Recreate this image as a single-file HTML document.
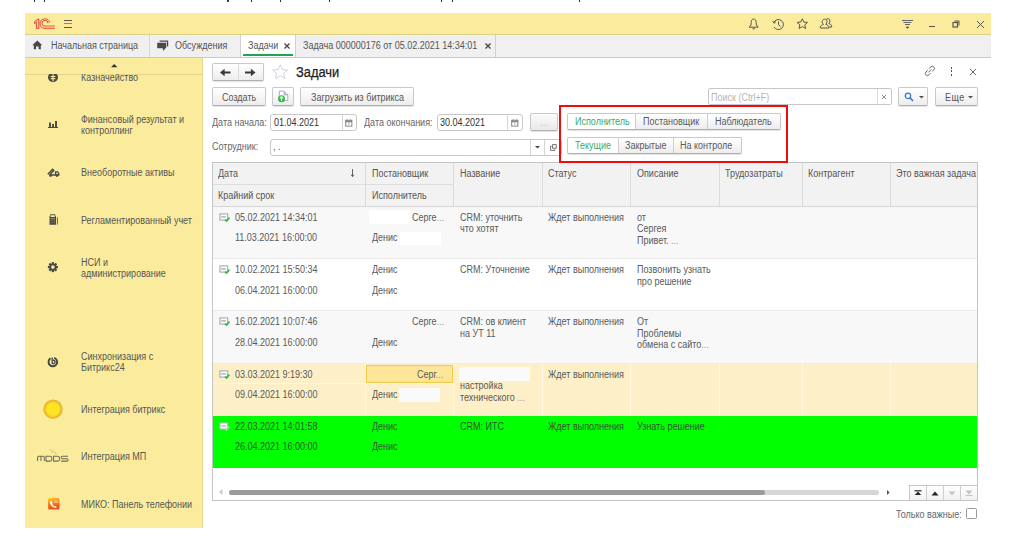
<!DOCTYPE html>
<html><head><meta charset="utf-8">
<style>
*{box-sizing:border-box;margin:0;padding:0}
html,body{width:1011px;height:540px;overflow:hidden;background:#fff}
body{position:relative;font-family:"Liberation Sans",sans-serif;font-size:9px;color:#4d4d4d}
.a{position:absolute}
.t{position:absolute;white-space:nowrap;line-height:11px;font-size:10px;transform:scaleX(0.9);transform-origin:0 0}
svg{position:absolute;overflow:visible}
#hdr{left:25px;top:13px;width:966px;height:22px;background:#fbec9d;border-bottom:1px solid #dccf86}
#tabs{left:25px;top:35px;width:966px;height:23px;background:#f0f0f0;border-bottom:1px solid #c9c9c9}
#side{left:25px;top:58px;width:178px;height:470px;background:#fbec9d;border-right:1px solid #e3d68e;overflow:hidden}
.btn{position:absolute;border:1px solid #c9c9c9;border-bottom-color:#b0b0b0;border-radius:2px;background:linear-gradient(#fff,#ededed);box-shadow:0 1px 1px rgba(0,0,0,.12)}
.inp{position:absolute;border:1px solid #c8c8c8;border-radius:3px;background:#fff}
.vd{position:absolute;width:1px;background:#d4d4d4}
.hd{position:absolute;height:1px;background:#d9d9d9}
.sb{color:#565656}
.dk{color:#333}
</style></head><body>

<!-- header -->
<div class="a" style="left:33.5px;top:0;width:1.3px;height:2px;background:#333"></div><div class="a" style="left:43.5px;top:0;width:1.3px;height:2px;background:#333"></div><div class="a" style="left:251px;top:0;width:1.3px;height:2px;background:#333"></div><div class="a" style="left:280px;top:0;width:1.3px;height:2px;background:#333"></div><div class="a" style="left:328.5px;top:0;width:1.3px;height:2px;background:#333"></div><div class="a" style="left:441px;top:0;width:1.3px;height:2px;background:#333"></div><div class="a" style="left:452px;top:0;width:1.3px;height:2px;background:#333"></div><div class="a" style="left:579px;top:0;width:1.3px;height:2px;background:#333"></div><div class="a" style="left:226.5px;top:0;width:2px;height:2px;border-radius:0 0 1px 0;background:#333"></div>
<div id="hdr" class="a"></div>
<svg width="30" height="14" style="left:32px;top:16px" viewBox="32 16 30 14">
 <g fill="none" stroke="#e3402d" stroke-width="0.95">
  <path d="M34.6,21.6 L37.9,19.1 L38.9,19.1 L38.9,28.4 L36.4,28.4 L36.4,22.4 L34.6,23.4 Z" fill="#f7c59a"/>
  <path d="M49.7,22.5 A4.9,4.7 0 1 0 45,28.3 H54.8"/>
  <path d="M48,23.3 A3,2.9 0 1 0 45,26.1 H54.8"/>
 </g>
 <path d="M45,27.2 H54.8" stroke="#f5b893" stroke-width="1.1"/>
</svg>
<div class="a" style="left:64px;top:20px;width:8px;height:1px;background:#555"></div>
<div class="a" style="left:64px;top:23px;width:8px;height:1px;background:#888"></div>
<div class="a" style="left:64px;top:27px;width:8px;height:1px;background:#555"></div>

<!-- header right icons -->
<svg width="12" height="12" style="left:748px;top:18px" viewBox="0 0 12 12">
 <path d="M5.7,1 C4,1 3.2,2.6 3.2,4.6 L3,7 L1.2,9.2 H10.2 L8.4,7 L8.2,4.6 C8.2,2.6 7.4,1 5.7,1 Z" fill="none" stroke="#555" stroke-width="1" stroke-linejoin="round"/>
 <path d="M4.6,10.8 H6.8" stroke="#555" stroke-width="1.1"/>
</svg>
<svg width="13" height="13" style="left:772px;top:18px" viewBox="0 0 13 13">
 <path d="M1.8,4.5 A5,5 0 1 1 2,9" fill="none" stroke="#555" stroke-width="1"/>
 <path d="M0.6,3 L2.2,5.3 L4,3.6" fill="none" stroke="#555" stroke-width="1"/>
 <path d="M6.5,3.5 L6.5,6.8 L8.5,8.6" fill="none" stroke="#555" stroke-width="1"/>
</svg>
<svg width="13" height="12" style="left:796px;top:18px" viewBox="0 0 13 12">
 <path d="M6.3,0.8 L7.9,4.1 L11.5,4.4 L8.8,6.8 L9.6,10.5 L6.3,8.6 L3,10.5 L3.8,6.8 L1.1,4.4 L4.7,4.1 Z" fill="none" stroke="#555" stroke-width="1" stroke-linejoin="round"/>
</svg>
<svg width="14" height="12" style="left:819px;top:18px" viewBox="0 0 14 12">
 <path d="M1.2,10 C1.4,7.6 3,6.8 4.5,6.4 C3.3,5.6 3,4.4 3.2,3.4 C3.5,1.8 4.6,1.2 5.6,1.2 C6.8,1.2 8,2 8,3.6 C8,4.8 7.6,5.6 6.8,6.4 C8.4,6.8 9.8,7.6 10,10 Z" fill="none" stroke="#555" stroke-width="1"/>
 <path d="M7.2,1.6 C7.6,0.9 8.3,0.7 8.9,0.7 C10,0.7 10.9,1.6 10.9,3 C10.9,4 10.5,4.8 9.9,5.5 C11.4,6 12.6,6.8 12.8,9 L10.4,9" fill="none" stroke="#555" stroke-width="1"/>
</svg>
<svg width="12" height="12" style="left:902px;top:19px" viewBox="0 0 12 12">
 <path d="M0,1.5 H11 M1.5,3.5 H9.5 M3,5.5 H8" stroke="#666" stroke-width="1"/>
 <path d="M3.5,7.8 H7.5 L5.5,9.8 Z" fill="#444"/>
</svg>
<div class="a" style="left:929px;top:26px;width:6px;height:1px;background:#555"></div>
<svg width="8" height="8" style="left:952px;top:20px" viewBox="0 0 8 8">
 <rect x="1" y="2.5" width="4.5" height="4.5" fill="none" stroke="#555" stroke-width="1.2"/>
 <path d="M2.5,1 H7 V5.5" fill="none" stroke="#555" stroke-width="1"/>
</svg>
<svg width="9" height="9" style="left:975.5px;top:20px" viewBox="0 0 9 9">
 <path d="M1,1 L8,8 M8,1 L1,8" stroke="#555" stroke-width="1"/>
</svg>

<!-- open tabs bar -->
<div id="tabs" class="a"></div>
<svg width="11" height="10" style="left:32px;top:40px" viewBox="0 0 11 10">
 <path d="M5.3,0.5 L10.3,5.2 L8.8,5.2 L8.8,9.2 L6.6,9.2 L6.6,6.6 L4,6.6 L4,9.2 L1.8,9.2 L1.8,5.2 L0.3,5.2 Z" fill="#484848"/>
</svg>
<div class="t" style="left:51px;top:40px;color:#555">Начальная страница</div>
<div class="vd" style="left:149px;top:35px;height:22px;background:#d6d6d6"></div>
<svg width="13" height="12" style="left:155.5px;top:39.5px" viewBox="0 0 13 12"><path d="M3.6,0.5 H12.2 V6.4 H10.9 V1.8 H3.6 Z" fill="#4a4a4a"/><path d="M1.2,2.7 H10.2 V8.3 H9.2 L7.6,10.9 L6.6,8.3 H1.2 Z" fill="#4a4a4a"/></svg>
<div class="t" style="left:174.5px;top:40px;color:#555">Обсуждения</div>
<div class="vd" style="left:240px;top:35px;height:22px;background:#d0d0d0"></div>
<div class="a" style="left:241px;top:35px;width:54px;height:22px;background:#fff"></div>
<div class="vd" style="left:295px;top:35px;height:22px;background:#d0d0d0"></div>
<div class="a" style="left:243px;top:54px;width:50px;height:1.5px;background:#1fa54c"></div>
<div class="t" style="left:248px;top:40px;color:#555">Задачи</div>
<svg width="6" height="6" style="left:284px;top:43px" viewBox="0 0 6 6"><path d="M0.5,0.5 L5.5,5.5 M5.5,0.5 L0.5,5.5" stroke="#444" stroke-width="1.3"/></svg>
<div class="t" style="left:303px;top:40px;color:#555">Задача 000000176 от 05.02.2021 14:34:01</div>
<svg width="6" height="6" style="left:484.5px;top:43px" viewBox="0 0 6 6"><path d="M0.5,0.5 L5.5,5.5 M5.5,0.5 L0.5,5.5" stroke="#444" stroke-width="1.3"/></svg>
<div class="vd" style="left:495px;top:35px;height:22px;background:#d0d0d0"></div>

<!-- sidebar -->
<div id="side" class="a sb"><div class="a" style="left:0;top:-1px;width:178px;height:470px">
<svg width="8" height="4" style="left:85.5px;top:7px" viewBox="0 0 8 4"><path d="M0,3.2 L3.2,0 L6.4,3.2 Z" fill="#333"/></svg>
<div class="a" style="left:0;top:16.5px;width:178px;height:1px;background:#e2d48c"></div>
<div class="a" style="left:0;top:17px;width:178px;height:452px;overflow:hidden">
 <div class="t" style="left:55.5px;top:-2px">Казначейство</div>
 <svg width="12" height="12" style="left:22px;top:-2.5px" viewBox="0 0 12 12"><circle cx="6" cy="5.3" r="5" fill="#484848"/><path d="M6,2.2 V9.5 M3.6,4.5 H8.4 M3.8,6.6 H8.2" stroke="#fbec9d" stroke-width="1.1"/></svg>
</div>
<div class="t" style="left:55.5px;top:57px">Финансовый результат и</div>
<div class="t" style="left:55.5px;top:68px">контроллинг</div>
<svg width="12" height="9" style="left:22px;top:63px" viewBox="0 0 12 9"><path d="M3,2.4 V7 M6,4 V7 M9,1.1 V7" stroke="#484848" stroke-width="1.9"/><path d="M1,7.5 H11" stroke="#484848" stroke-width="1"/></svg>
<div class="t" style="left:55.5px;top:110px">Внеоборотные активы</div>
<svg width="13" height="10" style="left:22px;top:111px" viewBox="0 0 13 10"><path d="M0.8,6.2 L5.6,1.2 L6.8,2.4 L2.6,7" fill="none" stroke="#484848" stroke-width="1.4"/><path d="M2.6,7 H9.6 M8.6,3.8 V7 H11.8 V5.4 L10.6,3.8 Z" fill="none" stroke="#484848" stroke-width="1.3"/><circle cx="3.6" cy="7.6" r="1.3" fill="#484848"/><circle cx="10" cy="7.6" r="1.3" fill="#484848"/></svg>
<div class="t" style="left:55.5px;top:158px">Регламентированный учет</div>
<svg width="10" height="12" style="left:23.5px;top:156.5px" viewBox="0 0 10 12"><rect x="0.5" y="2" width="6.5" height="8.8" rx="0.6" fill="#484848"/><rect x="1.7" y="0.8" width="4.1" height="2.6" fill="none" stroke="#484848" stroke-width="1"/><rect x="1.6" y="1.6" width="4.3" height="1.4" fill="#f7eab0"/><rect x="1.4" y="4.4" width="4.7" height="0.8" fill="#e8dca0" opacity=".7"/><path d="M1.6,6.9 H2.6 M3.3,6.9 H4.3 M5,6.9 H6 M1.6,8.8 H2.6 M3.3,8.8 H4.3 M5,8.8 H6" stroke="#9a9070" stroke-width="0.8"/><path d="M8.4,3.4 V10.6" stroke="#6a6350" stroke-width="1"/></svg>
<div class="t" style="left:55.5px;top:200px">НСИ и</div>
<div class="t" style="left:55.5px;top:211px">администрирование</div>
<svg width="12" height="12" style="left:22px;top:203.5px" viewBox="0 0 12 12"><g transform="translate(5.9,6.1)" fill="#484848"><circle r="3.7"/><g id="tt"><rect x="-1.1" y="-5" width="2.2" height="2"/></g><use href="#tt" transform="rotate(45)"/><use href="#tt" transform="rotate(90)"/><use href="#tt" transform="rotate(135)"/><use href="#tt" transform="rotate(180)"/><use href="#tt" transform="rotate(225)"/><use href="#tt" transform="rotate(270)"/><use href="#tt" transform="rotate(315)"/><circle r="1.8" fill="#fbec9d"/></g></svg>
<div class="t" style="left:55.5px;top:294px">Синхронизация с</div>
<div class="t" style="left:55.5px;top:305px">Битрикс24</div>
<svg width="12" height="12" style="left:22px;top:298.5px" viewBox="0 0 12 12"><path d="M3.6,2.3 A4.3,4.3 0 1 0 7.2,1.9" fill="none" stroke="#454545" stroke-width="1.9"/><path d="M5.2,1.4 V7.2 A1.7,1.7 0 1 0 6,4.3" fill="none" stroke="#454545" stroke-width="1.3"/></svg>
<div class="t" style="left:55.5px;top:347px">Интеграция битрикс</div>
<svg width="22" height="22" style="left:17px;top:340.5px" viewBox="0 0 22 22"><circle cx="11" cy="11.2" r="8.6" fill="#ffe423" stroke="#e9b92e" stroke-width="2.2"/><circle cx="11" cy="11.2" r="7" fill="none" stroke="#f5d22a" stroke-width="0.9"/></svg>
<div class="t" style="left:55.5px;top:394px">Интеграция МП</div>
<svg width="34" height="14" style="left:10.5px;top:394px" viewBox="0 0 34 14">
 <g fill="none" stroke="#736c57" stroke-width="1.05">
  <path d="M1.6,10.1 V6.3 Q1.6,5.3 2.6,5.3 H7.3 Q8.3,5.3 8.3,6.3 V10.1 M4.95,5.5 V10.1"/>
  <path d="M10,5.3 H14 Q15.9,5.3 15.9,7.2 V8.2 Q15.9,10.1 14,10.1 H10 Z"/>
  <path d="M17.6,5.3 H21.6 Q23.5,5.3 23.5,7.2 V8.2 Q23.5,10.1 21.6,10.1 H17.6 Z"/>
  <path d="M32,5.3 H26.4 Q25.1,5.3 25.1,6.5 Q25.1,7.7 26.4,7.7 H30.8 Q32.1,7.7 32.1,8.9 Q32.1,10.1 30.8,10.1 H25"/>
 </g>
 <path d="M14,-1.8 L16.2,0.6 M17.6,-0.4 L16,1.8 M18.6,1 L20.4,2.6 M19.4,3.2 L20.2,2" stroke="#e3b03a" stroke-width="0.8"/>
</svg>
<div class="t" style="left:55.5px;top:442px">МИКО: Панель телефонии</div>
<svg width="12" height="12" style="left:22.5px;top:440.5px" viewBox="0 0 12 12"><defs><linearGradient id="mk" x1="0" y1="0" x2="0.3" y2="1"><stop offset="0" stop-color="#ffd21e"/><stop offset="0.5" stop-color="#f6861e"/><stop offset="1" stop-color="#eb4c23"/></linearGradient></defs><rect x="0" y="0" width="11.5" height="11.5" rx="1.6" fill="url(#mk)"/><path d="M1.8,3.2 Q1.8,6.2 4.2,8.4 Q6.4,10.2 8.6,9.8 L8.4,8.8 L7.2,8 L6.3,8.4 Q4.7,7.2 4,5.6 L4.6,4.8 L3.8,3.2 Z" fill="#fff"/><path d="M5.8,3 H10.6 M6.2,4.4 H10.2" stroke="#fff" stroke-width="0.8" opacity="0.6"/></svg>
</div></div>

<!--CONTENT-->
<!-- form header -->
<div class="btn" style="left:212px;top:63px;width:52px;height:17.5px"></div>
<div class="vd" style="left:238px;top:64px;height:15px;background:#dadada"></div>
<svg width="11" height="7" style="left:219.5px;top:68.5px" viewBox="0 0 11 7"><path d="M10.5,3.5 H3" stroke="#3a3a3a" stroke-width="2"/><path d="M0,3.5 L4.6,-0.2 V7.2 Z" fill="#3a3a3a"/></svg>
<svg width="11" height="7" style="left:245px;top:68.5px" viewBox="0 0 11 7"><path d="M0,3.5 H7.5" stroke="#3a3a3a" stroke-width="2"/><path d="M10.5,3.5 L5.9,-0.2 V7.2 Z" fill="#3a3a3a"/></svg>
<svg width="17" height="16" style="left:271.5px;top:64px" viewBox="0 0 17 16"><path d="M8.2,0.8 L10.3,5.6 L15.6,6 L11.6,9.4 L12.9,14.6 L8.2,11.8 L3.5,14.6 L4.8,9.4 L0.8,6 L6.1,5.6 Z" fill="none" stroke="#c9ced6" stroke-width="0.9" stroke-linejoin="round"/></svg>
<div class="t dk" style="left:295.5px;top:64px;font-size:14px;line-height:16px;color:#1e1e1e;transform:scaleX(0.92);-webkit-text-stroke:0.25px #1e1e1e">Задачи</div>

<svg width="12" height="12" style="left:923.5px;top:65px" viewBox="0 0 12 12"><g fill="none" stroke="#6a6a6a" stroke-width="1"><path d="M5.2,3.6 L6.9,1.9 A2,2 0 0 1 9.8,4.8 L8.1,6.5"/><path d="M6.6,8.2 L4.9,9.9 A2,2 0 0 1 2,7 L3.7,5.3"/><path d="M4.4,7.4 L7.4,4.4"/></g></svg>
<div class="a" style="left:950.5px;top:66.5px;width:1.6px;height:2px;background:#555"></div>
<div class="a" style="left:950.5px;top:70px;width:1.6px;height:2px;background:#555"></div>
<div class="a" style="left:950.5px;top:73.5px;width:1.6px;height:2px;background:#555"></div>
<svg width="8" height="8" style="left:968.5px;top:67.5px" viewBox="0 0 8 8"><path d="M1,1 L7,7 M7,1 L1,7" stroke="#666" stroke-width="1"/></svg>

<!-- buttons row -->
<div class="btn" style="left:212px;top:87px;width:54px;height:18.5px"></div>
<div class="t" style="left:221.5px;top:92px;color:#575757">Создать</div>
<div class="btn" style="left:272px;top:87px;width:21.5px;height:18.5px"></div>
<svg width="12" height="13" style="left:277px;top:90px" viewBox="0 0 12 13"><path d="M2.3,1.1 H7 L10.8,4.9 V10.6 H2.3 Z" fill="#fff" stroke="#9aa7b6" stroke-width="0.9"/><path d="M7,1.1 V4.9 H10.8" fill="#c8d4e2" stroke="#9aa7b6" stroke-width="0.8"/><circle cx="4.5" cy="8.7" r="3.5" fill="#3ab54b"/><path d="M4.5,11 V6.8 M2.9,8.3 L4.5,6.6 L6.1,8.3" fill="none" stroke="#e8f7ea" stroke-width="1.1"/></svg>
<div class="btn" style="left:300px;top:87px;width:114px;height:18.5px"></div>
<div class="t" style="left:310.5px;top:92px;color:#575757">Загрузить из битрикса</div>

<div class="inp" style="left:708px;top:88px;width:183.5px;height:17px;border-radius:2px;border-color:#c6c6c6"></div>
<div class="vd" style="left:876.5px;top:89px;height:15px;background:#d9d9d9"></div>
<div class="t" style="left:711px;top:92px;color:#b5b5b5">Поиск (Ctrl+F)</div>
<svg width="6" height="6" style="left:881px;top:93.5px" viewBox="0 0 6 6"><path d="M1,1 L5,5 M5,1 L1,5" stroke="#808080" stroke-width="0.9"/></svg>
<div class="btn" style="left:898px;top:87px;width:30px;height:18.5px"></div>
<svg width="11" height="11" style="left:904px;top:92px" viewBox="0 0 11 11"><circle cx="4" cy="3.9" r="2.7" fill="none" stroke="#3c7dbd" stroke-width="1.3"/><path d="M6,5.9 L8.6,8.5" stroke="#3c7dbd" stroke-width="1.7" stroke-linecap="round"/></svg>
<svg width="5" height="3" style="left:918.5px;top:96px" viewBox="0 0 5 3"><path d="M0,0 H5 L2.5,2.6 Z" fill="#555"/></svg>
<div class="btn" style="left:934.5px;top:87px;width:43px;height:18.5px"></div>
<div class="t" style="left:944.5px;top:92px;color:#575757;letter-spacing:0.5px">Еще</div>
<svg width="5" height="3" style="left:968px;top:96px" viewBox="0 0 5 3"><path d="M0,0 H5 L2.5,2.6 Z" fill="#555"/></svg>

<!-- dates row -->
<div class="t" style="left:212px;top:117px;color:#666">Дата начала:</div>
<div class="inp" style="left:270px;top:113.5px;width:87px;height:17.5px"></div>
<div class="vd" style="left:341.5px;top:114.5px;height:15.5px;background:#d5d5d5"></div>
<div class="t dk" style="left:273.5px;top:117px">01.04.2021</div>
<svg width="8" height="8" style="left:344.5px;top:118.5px" viewBox="0 0 8 8"><rect x="0.7" y="1.3" width="6.2" height="5.8" fill="none" stroke="#7a7a7a" stroke-width="0.9"/><path d="M0.7,2.7 H6.9" stroke="#7a7a7a" stroke-width="1.2"/><path d="M2.2,0.2 V1.5 M5.4,0.2 V1.5" stroke="#7a7a7a" stroke-width="0.8"/><rect x="3.2" y="4.2" width="1.3" height="1.3" fill="#999"/></svg>
<div class="t" style="left:364px;top:117px;color:#666">Дата окончания:</div>
<div class="inp" style="left:436.5px;top:113.5px;width:86.5px;height:17.5px"></div>
<div class="vd" style="left:507px;top:114.5px;height:15.5px;background:#d5d5d5"></div>
<div class="t dk" style="left:440px;top:117px">30.04.2021</div>
<svg width="8" height="8" style="left:511px;top:118.5px" viewBox="0 0 8 8"><rect x="0.7" y="1.3" width="6.2" height="5.8" fill="none" stroke="#7a7a7a" stroke-width="0.9"/><path d="M0.7,2.7 H6.9" stroke="#7a7a7a" stroke-width="1.2"/><path d="M2.2,0.2 V1.5 M5.4,0.2 V1.5" stroke="#7a7a7a" stroke-width="0.8"/><rect x="3.2" y="4.2" width="1.3" height="1.3" fill="#999"/></svg>
<div class="btn" style="left:530px;top:113px;width:28px;height:18px;background:linear-gradient(#fbfbfb,#e9e9e9)"></div>
<div class="t" style="left:539.5px;top:117px;color:#c4c4c4;letter-spacing:0.3px">...</div>

<!-- employee row -->
<div class="t" style="left:212px;top:141px;color:#666">Сотрудник:</div>
<div class="inp" style="left:270px;top:138.5px;width:292px;height:17px"></div>
<div class="vd" style="left:529.5px;top:139.5px;height:15px;background:#d5d5d5"></div>
<div class="vd" style="left:544px;top:139.5px;height:15px;background:#d5d5d5"></div>
<div class="t" style="left:272.5px;top:141px;color:#5a4a90">, .</div>
<svg width="5" height="3" style="left:535px;top:145.5px" viewBox="0 0 5 3"><path d="M0,0 H5 L2.5,2.6 Z" fill="#444"/></svg>
<svg width="7" height="7" style="left:549.5px;top:143.5px" viewBox="0 0 7 7"><rect x="2.6" y="0.6" width="3.6" height="3.6" fill="none" stroke="#666" stroke-width="0.9"/><path d="M1.8,2.2 H0.6 V6.4 H4.8 V5.2" fill="none" stroke="#666" stroke-width="0.9"/></svg>

<!-- toggles -->
<div class="btn" style="left:566.5px;top:113px;width:214.5px;height:17px"></div>
<div class="a" style="left:567.5px;top:114px;width:67.5px;height:15px;background:#fff;border-radius:2px 0 0 2px"></div>
<div class="vd" style="left:635px;top:114px;height:15px;background:#cfcfcf"></div>
<div class="vd" style="left:706.5px;top:114px;height:15px;background:#cfcfcf"></div>
<div class="t" style="left:574.5px;top:116px;color:#3aa86e">Исполнитель</div>
<div class="t" style="left:642.5px;top:116px;color:#5a5a5a">Постановщик</div>
<div class="t" style="left:715px;top:116px;color:#5a5a5a">Наблюдатель</div>
<div class="btn" style="left:566.5px;top:137px;width:175px;height:17px"></div>
<div class="a" style="left:567.5px;top:138px;width:50.5px;height:15px;background:#fff;border-radius:2px 0 0 2px"></div>
<div class="vd" style="left:618px;top:138px;height:15px;background:#cfcfcf"></div>
<div class="vd" style="left:673px;top:138px;height:15px;background:#cfcfcf"></div>
<div class="t" style="left:574.5px;top:140px;color:#3aa86e">Текущие</div>
<div class="t" style="left:625px;top:140px;color:#5a5a5a">Закрытые</div>
<div class="t" style="left:680px;top:140px;color:#5a5a5a">На контроле</div>

<!--TABLE-->
<div class="a" style="left:212px;top:162px;width:766px;height:339px;border:1px solid #c4c4c4;background:#fff;overflow:hidden"></div>
<div class="a" style="left:213px;top:163px;width:764px;height:43.5px;background:#f2f2f2"></div>
<div class="hd" style="left:213px;top:206px;width:764px;background:#d6d6d6"></div>
<div class="hd" style="left:213px;top:184px;width:240px;background:#dedede"></div>
<div class="vd" style="left:365px;top:163px;height:43px;background:#dcdcdc"></div>
<div class="vd" style="left:453px;top:163px;height:43px;background:#dcdcdc"></div>
<div class="vd" style="left:542px;top:163px;height:43px;background:#dcdcdc"></div>
<div class="vd" style="left:630px;top:163px;height:43px;background:#dcdcdc"></div>
<div class="vd" style="left:719px;top:163px;height:43px;background:#dcdcdc"></div>
<div class="vd" style="left:801.5px;top:163px;height:43px;background:#dcdcdc"></div>
<div class="vd" style="left:890px;top:163px;height:43px;background:#dcdcdc"></div>
<div class="t" style="left:218px;top:168px;color:#555">Дата</div>
<div class="t" style="left:371.5px;top:168px;color:#555">Постановщик</div>
<div class="t" style="left:459.5px;top:168px;color:#555">Название</div>
<div class="t" style="left:548px;top:168px;color:#555">Статус</div>
<div class="t" style="left:637px;top:168px;color:#555">Описание</div>
<div class="t" style="left:724.5px;top:168px;color:#555">Трудозатраты</div>
<div class="t" style="left:807.5px;top:168px;color:#555">Контрагент</div>
<div class="t" style="left:896px;top:168px;color:#555">Это важная задача</div>
<svg width="5" height="9" style="left:350px;top:169px" viewBox="0 0 5 9"><path d="M2.5,0 V7" stroke="#555" stroke-width="0.9"/><path d="M0.8,5.8 L2.5,8.2 L4.2,5.8 Z" fill="#555"/></svg>
<div class="t" style="left:218px;top:190px;color:#555">Крайний срок</div>
<div class="t" style="left:371.5px;top:190px;color:#555">Исполнитель</div>
<div class="a" style="left:213px;top:206.5px;width:764px;height:52px;background:#f8f8f8"></div>
<div class="hd" style="left:213px;top:258.0px;width:764px;background:#ececec"></div>
<div class="a" style="left:213px;top:258.5px;width:764px;height:52px;background:#ffffff"></div>
<div class="hd" style="left:213px;top:310.0px;width:764px;background:#ececec"></div>
<div class="a" style="left:213px;top:310.5px;width:764px;height:53px;background:#f8f8f8"></div>
<div class="hd" style="left:213px;top:363.0px;width:764px;background:#ececec"></div>
<div class="a" style="left:213px;top:363.5px;width:764px;height:52px;background:#fdf0c8"></div>
<div class="a" style="left:213px;top:415.5px;width:764px;height:52px;background:#00ff00"></div>
<div class="vd" style="left:365px;top:364px;height:51.5px;background:#fff7df"></div>
<div class="vd" style="left:453px;top:364px;height:51.5px;background:#fff7df"></div>
<div class="vd" style="left:542px;top:364px;height:51.5px;background:#fff7df"></div>
<div class="vd" style="left:630px;top:364px;height:51.5px;background:#fff7df"></div>
<div class="vd" style="left:719px;top:364px;height:51.5px;background:#fff7df"></div>
<div class="vd" style="left:801.5px;top:364px;height:51.5px;background:#fff7df"></div>
<div class="vd" style="left:890px;top:364px;height:51.5px;background:#fff7df"></div>
<div class="hd" style="left:213px;top:383px;width:152px;background:#fff7df"></div>
<div class="hd" style="left:365px;top:383px;width:88px;background:#fff7df"></div>
<svg width="12" height="10" style="left:218.5px;top:212.5px" viewBox="0 0 12 10"><rect x="0.9" y="0.9" width="7.8" height="6.2" fill="#fcfcfd" stroke="#a3abb5" stroke-width="1.1"/><path d="M2.2,3.9 H6.8" stroke="#b3b9c1" stroke-width="1.6"/><path d="M6,6.6 L7.5,8 L10.4,4.6" fill="none" stroke="#36b948" stroke-width="1.7"/></svg>
<div class="t" style="left:235px;top:212px;color:#5a5a5a">05.02.2021 14:34:01</div>
<div class="t" style="left:235px;top:232px;color:#5a5a5a">11.03.2021 16:00:00</div>
<div class="a" style="left:369px;top:210px;width:41px;height:13.5px;background:#fff"></div>
<div class="t" style="left:412px;top:212px;color:#5a5a5a">Серге<span style="color:#999">...</span></div>
<div class="t" style="left:371.5px;top:232px;color:#5a5a5a">Денис</div>
<div class="a" style="left:400px;top:231.5px;width:41px;height:13.5px;background:#fff"></div>
<div class="t" style="left:459.5px;top:212px;color:#5a5a5a">CRM: уточнить</div>
<div class="t" style="left:459.5px;top:223px;color:#5a5a5a">что хотят</div>
<div class="t" style="left:548px;top:212px;color:#5a5a5a">Ждет выполнения</div>
<div class="t" style="left:637px;top:212px;color:#5a5a5a">от</div>
<div class="t" style="left:637px;top:223px;color:#5a5a5a">Сергея</div>
<div class="t" style="left:637px;top:235px;color:#5a5a5a">Привет. <span style="color:#999">...</span></div>
<svg width="12" height="10" style="left:218.5px;top:264.5px" viewBox="0 0 12 10"><rect x="0.9" y="0.9" width="7.8" height="6.2" fill="#fcfcfd" stroke="#a3abb5" stroke-width="1.1"/><path d="M2.2,3.9 H6.8" stroke="#b3b9c1" stroke-width="1.6"/><path d="M6,6.6 L7.5,8 L10.4,4.6" fill="none" stroke="#36b948" stroke-width="1.7"/></svg>
<div class="t" style="left:235px;top:264px;color:#5a5a5a">10.02.2021 15:50:34</div>
<div class="t" style="left:235px;top:285px;color:#5a5a5a">06.04.2021 16:00:00</div>
<div class="t" style="left:371.5px;top:264px;color:#5a5a5a">Денис</div>
<div class="t" style="left:371.5px;top:285px;color:#5a5a5a">Денис</div>
<div class="t" style="left:459.5px;top:264px;color:#5a5a5a">CRM: Уточнение</div>
<div class="t" style="left:548px;top:264px;color:#5a5a5a">Ждет выполнения</div>
<div class="t" style="left:637px;top:264px;color:#5a5a5a">Позвонить узнать</div>
<div class="t" style="left:637px;top:276px;color:#5a5a5a">про решение</div>
<svg width="12" height="10" style="left:218.5px;top:316.5px" viewBox="0 0 12 10"><rect x="0.9" y="0.9" width="7.8" height="6.2" fill="#fcfcfd" stroke="#a3abb5" stroke-width="1.1"/><path d="M2.2,3.9 H6.8" stroke="#b3b9c1" stroke-width="1.6"/><path d="M6,6.6 L7.5,8 L10.4,4.6" fill="none" stroke="#36b948" stroke-width="1.7"/></svg>
<div class="t" style="left:235px;top:316px;color:#5a5a5a">16.02.2021 10:07:46</div>
<div class="t" style="left:235px;top:337px;color:#5a5a5a">28.04.2021 16:00:00</div>
<div class="t" style="left:412px;top:316px;color:#5a5a5a">Серге<span style="color:#999">...</span></div>
<div class="t" style="left:371.5px;top:337px;color:#5a5a5a">Денис</div>
<div class="t" style="left:459.5px;top:316px;color:#5a5a5a">CRM: ов клиент</div>
<div class="t" style="left:459.5px;top:328px;color:#5a5a5a">на УТ 11</div>
<div class="t" style="left:548px;top:316px;color:#5a5a5a">Ждет выполнения</div>
<div class="t" style="left:637px;top:316px;color:#5a5a5a">От</div>
<div class="t" style="left:637px;top:328px;color:#5a5a5a">Проблемы</div>
<div class="t" style="left:637px;top:339px;color:#5a5a5a">обмена с сайто<span style="color:#999">...</span></div>
<div class="a" style="left:366px;top:364.5px;width:87px;height:18.5px;background:#fde59a;border:1.5px solid #f6c744"></div>
<svg width="12" height="10" style="left:218.5px;top:369.5px" viewBox="0 0 12 10"><rect x="0.9" y="0.9" width="7.8" height="6.2" fill="#fcfcfd" stroke="#a3abb5" stroke-width="1.1"/><path d="M2.2,3.9 H6.8" stroke="#b3b9c1" stroke-width="1.6"/><path d="M6,6.6 L7.5,8 L10.4,4.6" fill="none" stroke="#36b948" stroke-width="1.7"/></svg>
<div class="t" style="left:235px;top:369px;color:#5a5a5a">03.03.2021 9:19:30</div>
<div class="t" style="left:235px;top:389px;color:#5a5a5a">09.04.2021 16:00:00</div>
<div class="t" style="left:416.5px;top:369px;color:#5a5a5a">Серг<span style="color:#999">...</span></div>
<div class="t" style="left:371.5px;top:389px;color:#5a5a5a">Денис</div>
<div class="a" style="left:398.5px;top:388px;width:41.5px;height:14px;background:#fafafa"></div>
<div class="a" style="left:459px;top:367px;width:71px;height:14px;background:#fafafa"></div>
<div class="t" style="left:460px;top:380px;color:#5a5a5a">настройка</div>
<div class="t" style="left:460px;top:392px;color:#5a5a5a">технического <span style="color:#999">...</span></div>
<div class="t" style="left:548px;top:369px;color:#5a5a5a">Ждет выполнения</div>
<svg width="12" height="10" style="left:218.5px;top:421.5px" viewBox="0 0 12 10"><rect x="0.9" y="0.9" width="7.8" height="6.2" fill="#f4f8f4" stroke="#a3b5a8" stroke-width="1.1"/><path d="M2.2,3.9 H6.8" stroke="#b8c8bc" stroke-width="1.6"/><path d="M6,6.6 L7.5,8 L10.4,4.6" fill="none" stroke="#a8d8ae" stroke-width="1.5"/></svg>
<div class="t" style="left:235px;top:421px;color:#305830">22.03.2021 14:01:58</div>
<div class="t" style="left:235px;top:441px;color:#305830">26.04.2021 16:00:00</div>
<div class="t" style="left:371.5px;top:421px;color:#305830">Денис</div>
<div class="t" style="left:371.5px;top:441px;color:#305830">Денис</div>
<div class="t" style="left:459.5px;top:421px;color:#305830">CRM: ИТС</div>
<div class="t" style="left:548px;top:421px;color:#305830">Ждет выполнения</div>
<div class="t" style="left:637px;top:421px;color:#305830">Узнать решение</div>
<svg width="4" height="6" style="left:218.5px;top:489px" viewBox="0 0 4 6"><path d="M3.5,0 V6 L0,3 Z" fill="#c8c8c8"/></svg>
<div class="a" style="left:228.5px;top:489.5px;width:650.5px;height:5.5px;border-radius:3px;background:#d6d6d6"></div>
<div class="a" style="left:228.5px;top:489.5px;width:536px;height:5.5px;border-radius:3px;background:#9b9b9b"></div>
<svg width="3" height="5" style="left:886.5px;top:490px" viewBox="0 0 3 5"><path d="M0,0 V5 L2.6,2.5 Z" fill="#555"/></svg>
<div class="a" style="left:909px;top:485px;width:69px;height:16px;border:1px solid #c8c8c8;border-bottom:none;border-right:none;background:linear-gradient(#fff,#f0f0f0)"></div>
<div class="vd" style="left:926px;top:486px;height:14px;background:#cfcfcf"></div>
<div class="vd" style="left:943px;top:486px;height:14px;background:#cfcfcf"></div>
<div class="vd" style="left:960px;top:486px;height:14px;background:#cfcfcf"></div>
<svg width="8" height="6" style="left:913.5px;top:490px" viewBox="0 0 8 6"><path d="M0.5,0.8 H7.5" stroke="#222" stroke-width="1.2"/><path d="M4,1.6 L7.2,5 H0.8 Z" fill="#222"/></svg>
<svg width="8" height="5" style="left:931px;top:490.5px" viewBox="0 0 8 5"><path d="M4,0.5 L7.5,4.5 H0.5 Z" fill="#222"/></svg>
<svg width="8" height="5" style="left:948px;top:490.5px" viewBox="0 0 8 5"><path d="M4,4.5 L7.5,0.5 H0.5 Z" fill="#c4c4c4"/></svg>
<svg width="8" height="6" style="left:964.5px;top:489.5px" viewBox="0 0 8 6"><path d="M0.5,5.5 H7.5" stroke="#c4c4c4" stroke-width="1"/><path d="M4,4.7 L7.5,0.5 H0.5 Z" fill="#c4c4c4"/></svg>
<div class="a" style="left:212px;top:500px;width:766px;height:1px;background:#c4c4c4"></div>
<div class="a" style="left:977px;top:162px;width:1px;height:339px;background:#c4c4c4"></div>
<div class="t" style="left:896px;top:509px;color:#666">Только важные:</div>
<div class="a" style="left:966px;top:508px;width:11px;height:10.5px;border:1px solid #9a9a9a;border-radius:1.5px;background:#fff"></div>
<!--/TABLE-->

<div class="a" style="left:559px;top:105px;width:229px;height:57.5px;border:2px solid #f00c0c"></div>


</body></html>
